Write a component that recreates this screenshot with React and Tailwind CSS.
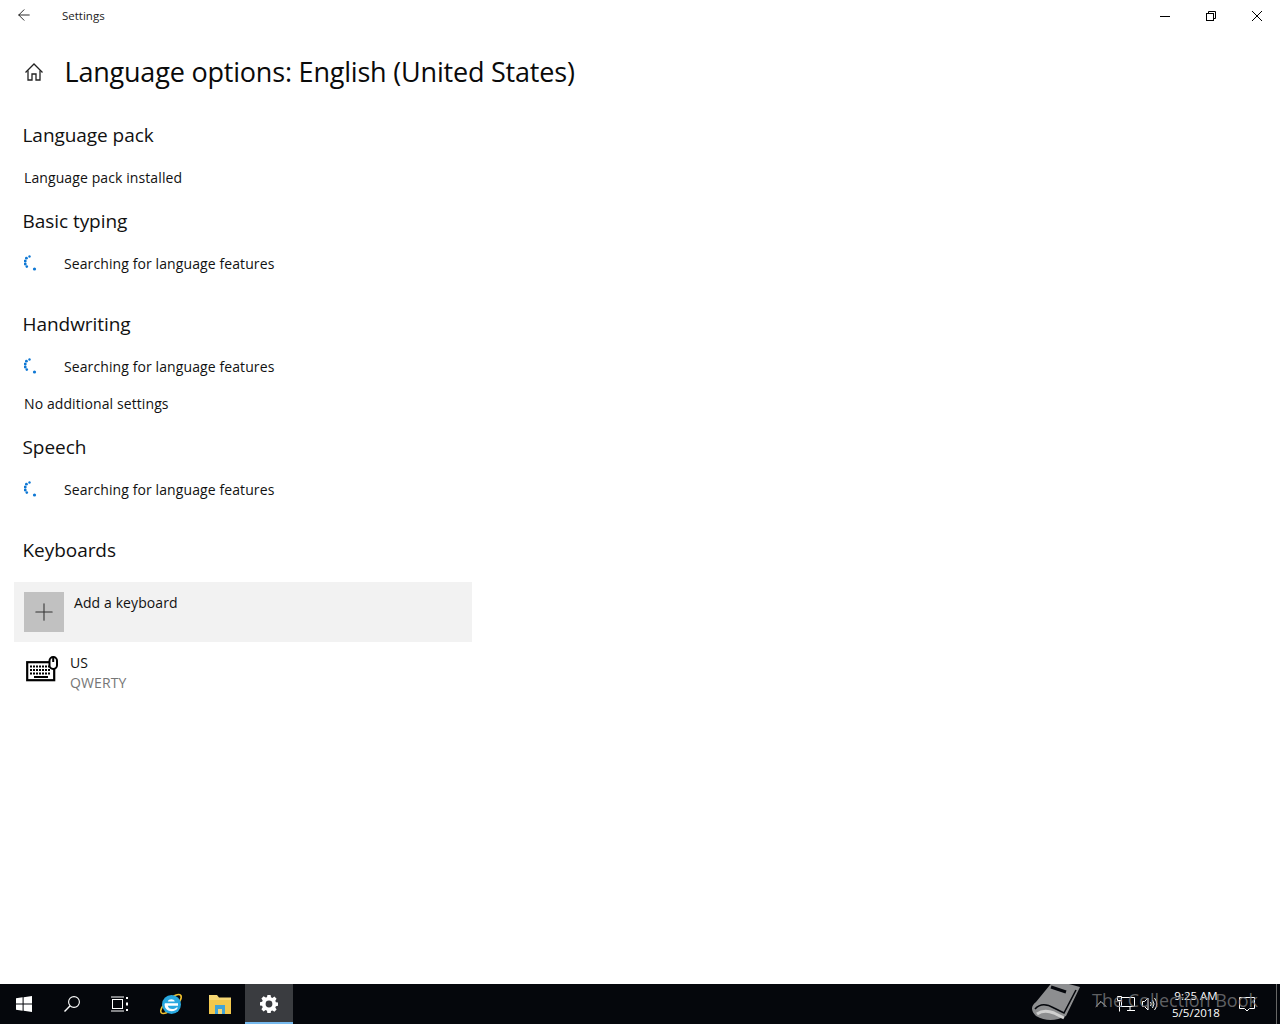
import React from "react";
import { ArrowLeft, Plus, ChevronUp } from "lucide-react";

const font = "font-['Open_Sans','Noto_Sans',sans-serif]";

function Spinner() {
  const dots = [
    [5.5, 0.5, 1.2], [2.4, 2.2, 1.4], [1.2, 5, 1.5], [1.2, 8, 1.5], [2.8, 10.6, 1.3], [10.5, 13, 1.6],
  ];
  return (
    <svg width="16" height="16" viewBox="0 0 16 16" className="shrink-0">
      {dots.map(([cx, cy, r], i) => (
        <circle key={i} cx={cx} cy={cy + 1} r={r} fill="#0f78d4" />
      ))}
    </svg>
  );
}

function Heading({ children, className = "" }) {
  return (
    <h2 className={`h-[30px] pl-[8.5px] text-[19px] leading-[30px] text-[#111] tracking-[-0.05px] ${className}`}>
      {children}
    </h2>
  );
}

function Searching({ className = "" }) {
  return (
    <div className={`flex h-6 items-center pl-[10px] ${className}`}>
      <Spinner />
      <span className="ml-6 pt-[2px] text-[14px] leading-6 text-[#111] tracking-[0.1px]">Searching for language features</span>
    </div>
  );
}

function Note({ children, className = "" }) {
  return <p className={`h-6 pl-[10px] pt-[1px] text-[14px] leading-6 text-[#111] tracking-[0.1px] ${className}`}>{children}</p>;
}

function HomeIcon() {
  return (
    <svg width="20" height="20" viewBox="0 0 20 20" fill="none" stroke="#222" strokeWidth="1.3">
      <path d="M1.5 10.5 10 2l8.5 8.5" />
      <path d="M4 8.5V18h4v-6h4v6h4V8.5" />
    </svg>
  );
}

function MinimizeIcon() {
  return (
    <svg width="10" height="10" viewBox="0 0 10 10" fill="none" stroke="#000" strokeWidth="1">
      <path d="M0 5.5h10" />
    </svg>
  );
}

function RestoreIcon() {
  return (
    <svg width="10" height="10" viewBox="0 0 10 10" fill="none" stroke="#000" strokeWidth="1">
      <rect x="0.5" y="2.5" width="7" height="7" />
      <path d="M2.5 2.5v-2h7v7h-2" />
    </svg>
  );
}

function CloseIcon() {
  return (
    <svg width="10" height="10" viewBox="0 0 10 10" fill="none" stroke="#000" strokeWidth="1">
      <path d="M0 0l10 10M10 0 0 10" />
    </svg>
  );
}

function KeyboardIcon() {
  return (
    <svg width="32" height="27" viewBox="0 0 32 27" fill="none" stroke="#000">
      <rect x="1.2" y="6.2" width="27" height="18" strokeWidth="2.2" fill="#fff" />
      <path d="M4 10.5h21M4 14h21M4 17.5h21" strokeWidth="2" strokeDasharray="2 1" />
      <path d="M8 21h14" strokeWidth="2" />
      <rect x="23.5" y="1" width="7.5" height="12" rx="3.7" strokeWidth="2" fill="#fff" />
      <path d="M27.2 1v5" strokeWidth="2" />
    </svg>
  );
}

function WindowsLogo() {
  return (
    <svg width="16" height="16" viewBox="0 0 16 16" fill="#fff">
      <path d="M0 2.3 6.6 1.3v6.2H0zM7.6 1.2 16 0v7.5H7.6zM0 8.5h6.6v6.2L0 13.7zM7.6 8.5H16V16l-8.4-1.2z" />
    </svg>
  );
}

function SearchIcon() {
  return (
    <svg width="16" height="16" viewBox="0 0 16 16" fill="none" stroke="#fff" strokeWidth="1.1">
      <circle cx="10" cy="6" r="5.4" />
      <path d="M6.2 9.8.5 15.5" strokeWidth="1.4" />
    </svg>
  );
}

function TaskViewIcon() {
  return (
    <svg width="18" height="16" viewBox="0 0 18 16" fill="none" stroke="#fff" strokeWidth="1">
      <rect x="1.5" y="3.5" width="10" height="9" />
      <path d="M0 1h13M0 15h13" />
      <path d="M15 1h2v2h-2zM15 6.5h2v3h-2zM15 13h2v2h-2z" fill="#fff" stroke="none" />
    </svg>
  );
}

function IeIcon() {
  return (
    <svg width="26" height="26" viewBox="0 0 26 26" fill="none">
      <ellipse cx="13" cy="13" rx="13" ry="5" transform="rotate(-42 13 13)" stroke="#f2c230" strokeWidth="1.6" />
      <circle cx="13.5" cy="13.5" r="9.5" fill="#29a8e0" />
      <path d="M7 12.2h13v2.6H9.8c.4 3.4 5.6 4.4 8.6 1.6h1.5c-2 5.6-13.4 5.4-13.3-2.8 0-.5 0-1 .4-1.4zM9.8 10.6c.6-3 6.4-3 7 0z" fill="#fff" />
    </svg>
  );
}

function FolderIcon() {
  return (
    <svg width="22" height="20" viewBox="0 0 22 20">
      <path d="M0 1h8l2 2.5h12V20H0z" fill="#f6d774" />
      <path d="M0 6h22v14H0z" fill="#f3c84c" />
      <path d="M6 11h10v9H6z" fill="#42a4d8" />
      <path d="M9 15h4v5H9z" fill="#f6d774" />
    </svg>
  );
}

function GearIcon() {
  return (
    <svg width="18" height="18" viewBox="0 0 18 18">
      <path
        fill="#fff"
        fillRule="evenodd"
        d="M7.4 0h3.2l.4 2.3 1.4.6 2-1.3 2.2 2.2-1.3 2 .6 1.4 2.3.4v3.2l-2.3.4-.6 1.4 1.3 2-2.2 2.2-2-1.3-1.4.6-.4 2.3H7.4L7 15.7l-1.4-.6-2 1.3-2.2-2.2 1.3-2-.6-1.4L0 10.4V7.2l2.1-.4.6-1.4-1.3-2 2.2-2.2 2 1.3L7 2.3zM9 5.6a3.4 3.4 0 1 0 0 6.8 3.4 3.4 0 0 0 0-6.8z"
      />
    </svg>
  );
}

function BookMark() {
  return (
    <svg width="52" height="40" viewBox="0 0 52 40" fill="none">
      <path d="M24 -4 50 3 36 32 Q20 40 6 32 Q-2 24 6 18z" fill="#8d8e90" />
      <path d="M5 25 Q12 17 24 24 L34 29 L46 6" stroke="#05070c" strokeWidth="1.6" />
      <path d="M7 30 Q14 25 24 29 L34 34" stroke="#d0d0d0" strokeWidth="3" />
      <path d="M21 3 36 8" stroke="#05070c" strokeWidth="3" />
    </svg>
  );
}

function TrayNetwork() {
  return (
    <svg width="18" height="16" viewBox="0 0 18 16" fill="none" stroke="#fff" strokeWidth="1">
      <path d="M4.5 1.5h13v9h-13zM10 14.5h8M13 10.5v4" />
      <path d="M.5.5h4v4h-4zM2.5 4.5v11M0 10.5h5" />
    </svg>
  );
}

function TrayVolume() {
  return (
    <svg width="16" height="14" viewBox="0 0 16 14" fill="none" stroke="#fff" strokeWidth="1">
      <path d="M.5 4.5h2L6 1v12L2.5 9.5h-2z" />
      <path d="M8.5 5q1.5 2 0 4M10.5 3q3 4 0 8M12.5 1q4.5 6 0 12" />
    </svg>
  );
}

function TrayNotify() {
  return (
    <svg width="16" height="16" viewBox="0 0 16 16" fill="none" stroke="#fff" strokeWidth="1">
      <path d="M.5 1.5h15v11h-5L8 15l-2.5-2.5h-5z" />
    </svg>
  );
}

function TaskButton({ children, active }) {
  return (
    <div className={`relative flex h-10 w-12 items-center justify-center ${active ? "bg-[#3a3c40]" : ""}`}>
      {children}
      {active && <div className="absolute inset-x-0 bottom-0 h-[2px] bg-[#76b9ed]" />}
    </div>
  );
}

export default function App() {
  return (
    <div className={`flex h-screen w-full flex-col overflow-hidden bg-white ${font}`}>
      {/* Title bar */}
      <header className="flex h-[32px] shrink-0 items-center">
        <div className="flex w-[48px] justify-center">
          <ArrowLeft size={18} strokeWidth={1.1} color="#000" className="-mt-[3px]" />
        </div>
        <span className="ml-[14px] text-[11.5px] leading-[32px] text-[#222]">Settings</span>
        <div className="ml-auto flex">
          <div className="flex h-[30px] w-[46px] items-center justify-center">
            <MinimizeIcon />
          </div>
          <div className="flex h-[30px] w-[46px] items-center justify-center">
            <RestoreIcon />
          </div>
          <div className="flex h-[30px] w-[46px] items-center justify-center">
            <CloseIcon />
          </div>
        </div>
      </header>

      {/* Page */}
      <main className="min-h-0 flex-1">
        <div className="flex h-[80px] items-center">
          <div className="ml-[24px] flex w-[20px] justify-center">
            <HomeIcon />
          </div>
          <h1 className="ml-[20.5px] text-[27px] leading-[80px] tracking-[-0.2px] text-[#0a0a0a]">
            Language options: English (United States)
          </h1>
        </div>

        <div className="mt-[8px] pl-[14px]">
          <Heading>Language pack</Heading>
          <Note className="mt-[15px]">Language pack installed</Note>

          <Heading className="mt-[17px]">Basic typing</Heading>
          <Searching className="mt-[15px]" />

          <Heading className="mt-[34px]">Handwriting</Heading>
          <Searching className="mt-[15px]" />
          <Note className="mt-[13px]">No additional settings</Note>

          <Heading className="mt-[17px]">Speech</Heading>
          <Searching className="mt-[15px]" />

          <Heading className="mt-[34px]">Keyboards</Heading>

          <div className="mt-[17px] flex h-[60px] w-[458px] items-start bg-[#f2f2f2] pl-[10px] pt-[10px]">
            <div className="flex h-[40px] w-[40px] items-center justify-center bg-[#c1c1c1]">
              <Plus size={28} strokeWidth={0.9} color="#333" />
            </div>
            <span className="ml-[10px] text-[14px] leading-[22px] text-[#111] tracking-[0.1px]">Add a keyboard</span>
          </div>

          <div className="mt-[11px] flex items-start pl-[12px]">
            <div className="mt-[3px] h-[27px] w-[44px] shrink-0">
              <KeyboardIcon />
            </div>
            <div className="text-[14px] leading-[20px] tracking-[0.1px]">
              <p className="text-[#111]">US</p>
              <p className="text-[#767676]">QWERTY</p>
            </div>
          </div>
        </div>
      </main>

      {/* Taskbar */}
      <footer className="relative flex h-10 shrink-0 items-center bg-[#05070c]">
        <TaskButton><WindowsLogo /></TaskButton>
        <TaskButton><SearchIcon /></TaskButton>
        <TaskButton><TaskViewIcon /></TaskButton>
        <div className="flex h-10 w-[53px] items-center justify-center"><IeIcon /></div>
        <div className="flex h-10 w-[45px] items-center justify-center"><FolderIcon /></div>
        <div className="ml-[3px]">
          <TaskButton active><GearIcon /></TaskButton>
        </div>

        <div className="ml-auto flex h-10 items-center">
          <ChevronUp size={20} strokeWidth={1} color="#fff" className="mr-[6px]" />
          <TrayNetwork />
          <div className="ml-[7px]"><TrayVolume /></div>
          <div className="ml-[5px] w-[66px] text-center text-[11.5px] leading-[17px] text-white">
            <p>9:25 AM</p>
            <p>5/5/2018</p>
          </div>
          <div className="ml-[10px]"><TrayNotify /></div>
          <div className="ml-[21px] mr-[3px] h-10 w-px bg-[#666]" />
        </div>

        {/* Watermark over the tray */}
        <div className="pointer-events-none absolute left-[1030px] top-0 flex h-10 items-center overflow-hidden">
          <BookMark />
          <span className="ml-[10px] -mt-[8px] text-[18px] leading-6 whitespace-nowrap text-[#77787b]/80">The Collection Book</span>
        </div>
      </footer>
    </div>
  );
}
